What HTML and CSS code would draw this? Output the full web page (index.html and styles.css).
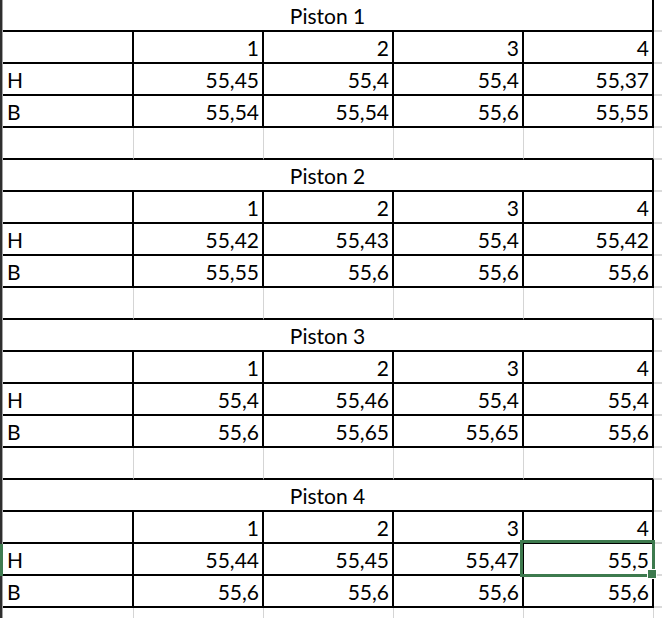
FILE: index.html
```html
<!DOCTYPE html>
<html>
<head>
<meta charset="utf-8">
<link rel="stylesheet" href="styles.css">
</head>
<body>
<div class="sheet">
  <!-- Piston 1 -->
  <div class="rh"></div><div class="title">Piston 1</div><div class="x"></div>
  <div class="rh"></div><div class="c"></div><div class="c">1</div><div class="c">2</div><div class="c">3</div><div class="c">4</div><div class="x"></div>
  <div class="rh"></div><div class="c lbl">H</div><div class="c">55,45</div><div class="c">55,4</div><div class="c">55,4</div><div class="c">55,37</div><div class="x"></div>
  <div class="rh"></div><div class="c lbl">B</div><div class="c">55,54</div><div class="c">55,54</div><div class="c">55,6</div><div class="c">55,55</div><div class="x"></div>
  <div class="rh"></div><div class="e"></div><div class="e"></div><div class="e"></div><div class="e"></div><div class="e"></div><div class="x"></div>
  <!-- Piston 2 -->
  <div class="rh"></div><div class="title">Piston 2</div><div class="x"></div>
  <div class="rh"></div><div class="c"></div><div class="c">1</div><div class="c">2</div><div class="c">3</div><div class="c">4</div><div class="x"></div>
  <div class="rh"></div><div class="c lbl">H</div><div class="c">55,42</div><div class="c">55,43</div><div class="c">55,4</div><div class="c">55,42</div><div class="x"></div>
  <div class="rh"></div><div class="c lbl">B</div><div class="c">55,55</div><div class="c">55,6</div><div class="c">55,6</div><div class="c">55,6</div><div class="x"></div>
  <div class="rh"></div><div class="e"></div><div class="e"></div><div class="e"></div><div class="e"></div><div class="e"></div><div class="x"></div>
  <!-- Piston 3 -->
  <div class="rh"></div><div class="title">Piston 3</div><div class="x"></div>
  <div class="rh"></div><div class="c"></div><div class="c">1</div><div class="c">2</div><div class="c">3</div><div class="c">4</div><div class="x"></div>
  <div class="rh"></div><div class="c lbl">H</div><div class="c">55,4</div><div class="c">55,46</div><div class="c">55,4</div><div class="c">55,4</div><div class="x"></div>
  <div class="rh"></div><div class="c lbl">B</div><div class="c">55,6</div><div class="c">55,65</div><div class="c">55,65</div><div class="c">55,6</div><div class="x"></div>
  <div class="rh"></div><div class="e"></div><div class="e"></div><div class="e"></div><div class="e"></div><div class="e"></div><div class="x"></div>
  <!-- Piston 4 -->
  <div class="rh"></div><div class="title">Piston 4</div><div class="x"></div>
  <div class="rh"></div><div class="c"></div><div class="c">1</div><div class="c">2</div><div class="c">3</div><div class="c">4</div><div class="x"></div>
  <div class="rh sel"></div><div class="c lbl">H</div><div class="c">55,44</div><div class="c">55,45</div><div class="c">55,47</div><div class="c active">55,5<span class="selbox"></span><span class="handle"></span></div><div class="x"></div>
  <div class="rh"></div><div class="c lbl">B</div><div class="c">55,6</div><div class="c">55,6</div><div class="c">55,6</div><div class="c">55,6</div><div class="x"></div>
  <!-- partial row -->
  <div class="rh"></div><div class="g"></div><div class="g"></div><div class="g"></div><div class="g"></div><div class="g"></div><div class="xg"></div>
</div>
</body>
</html>
```

FILE: styles.css
```css
html, body {
  margin: 0;
  padding: 0;
  background: #ffffff;
}
body {
  width: 662px;
  height: 618px;
  overflow: hidden;
  font-family: "Lato", "Liberation Sans", sans-serif;
  font-size: 21px;
  color: #000;
}
.sheet {
  display: grid;
  grid-template-columns: 3px 131px 130px 130px 130px 130px 1fr;
  grid-auto-rows: 32px;
}
.rh {
  background: linear-gradient(to right, #2e2e2e 0 2px, #a4a4a4 2px 3px);
}
.rh.sel {
  background: #3f7b50;
}
.c, .title, .e, .x, .g, .xg {
  box-sizing: border-box;
}
.c {
  border-right: 2px solid #000;
  border-bottom: 2px solid #000;
  padding: 1px 3px 0 4px;
  line-height: 30px;
  text-align: right;
  white-space: nowrap;
}
.c.lbl {
  text-align: left;
}
.title {
  grid-column: span 5;
  border-right: 2px solid #000;
  border-bottom: 2px solid #000;
  padding-top: 1px;
  line-height: 30px;
  text-align: center;
}
.e {
  border-right: 1px solid #d5d5d5;
  border-bottom: 2px solid #000;
}
.x {
  border-bottom: 2px solid #dadada;
}
.g {
  border-right: 1px solid #d5d5d5;
}
.active {
  position: relative;
}
.selbox {
  position: absolute;
  left: -4px;
  top: -4px;
  width: 135px;
  height: 37px;
  box-sizing: border-box;
  border: 3px solid #3d7a4e;
}
.handle {
  position: absolute;
  left: 123px;
  top: 25px;
  width: 8px;
  height: 8px;
  background: #3d7a4e;
  border: 1px solid #ffffff;
}
```
